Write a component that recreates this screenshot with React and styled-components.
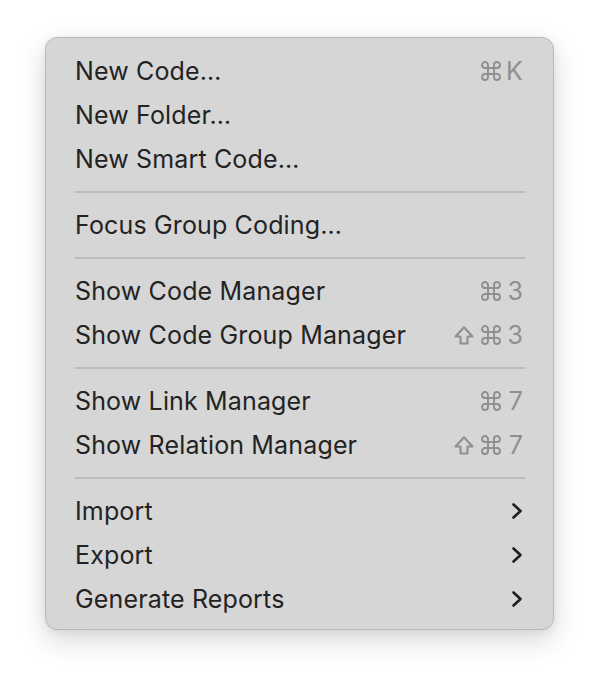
import React from "react";
import styled, { createGlobalStyle } from "styled-components";

const Global = createGlobalStyle`
  html, body { margin: 0; padding: 0; background: #ffffff; }
  body { font-family: Inter, "Noto Sans", "DejaVu Sans", sans-serif; }
`;

const Page = styled.div`
  padding: 37px 0 0 45px;
  width: 600px;
  height: 684px;
  box-sizing: border-box;
`;

const Panel = styled.div`
  width: 509px;
  height: 593px;
  box-sizing: border-box;
  background: #d6d6d6;
  border: 1px solid #b8b8b8;
  border-radius: 12px;
  box-shadow: 0 10px 28px rgba(0, 0, 0, 0.16), 0 2px 8px rgba(0, 0, 0, 0.06);
  padding: 11px 0 8px;
  display: flex;
  flex-direction: column;
`;

const Row = styled.div`
  height: 44px;
  display: flex;
  align-items: center;
  justify-content: space-between;
  padding: 0 30px 0 29px;
  color: #232323;
  font-size: 25px;
  letter-spacing: 0.15px;
`;

const Label = styled.span`
  white-space: nowrap;
`;

const Shortcut = styled.span`
  display: flex;
  align-items: center;
  color: #8f8f8f;
  font-size: 25px;
  svg { display: block; }
`;

const IconSlot = styled.span`
  display: flex;
  margin-right: ${(p) => p.$gap}px;
`;

const Key = styled.span`
  width: 17px;
  text-align: right;
`;

const Chevron = () => (
  <svg width="12" height="18" viewBox="0 0 12 18" fill="none">
    <path d="M2.5 2.5 L9.5 9 L2.5 15.5" stroke="#1f1f1f" strokeWidth="2.6" strokeLinecap="round" strokeLinejoin="round" />
  </svg>
);

const CommandIcon = () => (
  <svg width="24" height="24" viewBox="0 0 24 24" fill="none">
    <path
      d="M15 6v12a3 3 0 1 0 3-3H6a3 3 0 1 0 3 3V6a3 3 0 1 0-3 3h12a3 3 0 1 0-3-3"
      stroke="#8f8f8f"
      strokeWidth="1.9"
      strokeLinecap="round"
      strokeLinejoin="round"
    />
  </svg>
);

const ShiftIcon = () => (
  <svg width="22" height="20" viewBox="0 0 22 20" fill="none">
    <path
      d="M7.5 18.5v-7H2.5L11 2.2l8.5 9.3h-5v7z"
      stroke="#8f8f8f"
      strokeWidth="2.1"
      strokeLinejoin="round"
    />
  </svg>
);

const groups = [
  [
    { label: "New Code…", keys: { shift: false, key: "K" } },
    { label: "New Folder…" },
    { label: "New Smart Code…" },
  ],
  [{ label: "Focus Group Coding…" }],
  [
    { label: "Show Code Manager", keys: { shift: false, key: "3" } },
    { label: "Show Code Group Manager", keys: { shift: true, key: "3" } },
  ],
  [
    { label: "Show Link Manager", keys: { shift: false, key: "7" } },
    { label: "Show Relation Manager", keys: { shift: true, key: "7" } },
  ],
  [
    { label: "Import", sub: true },
    { label: "Export", sub: true },
    { label: "Generate Reports", sub: true },
  ],
];

const Separator = styled.div`
  height: 2px;
  margin: 10px 28px 10px 29px;
  background: #bcbcbc;
`;

export default function App() {
  return (
    <>
      <Global />
      <Page>
        <Panel>
          {groups.map((g, gi) => (
            <React.Fragment key={gi}>
              {gi > 0 && <Separator />}
              {g.map((item) => (
                <Row key={item.label}>
                  <Label>{item.label}</Label>
                  {item.keys && (
                    <Shortcut>
                      {item.keys.shift && (
                        <IconSlot $gap={4}>
                          <ShiftIcon />
                        </IconSlot>
                      )}
                      <IconSlot $gap={3}>
                        <CommandIcon />
                      </IconSlot>
                      <Key>{item.keys.key}</Key>
                    </Shortcut>
                  )}
                  {item.sub && <Chevron />}
                </Row>
              ))}
            </React.Fragment>
          ))}
        </Panel>
      </Page>
    </>
  );
}
